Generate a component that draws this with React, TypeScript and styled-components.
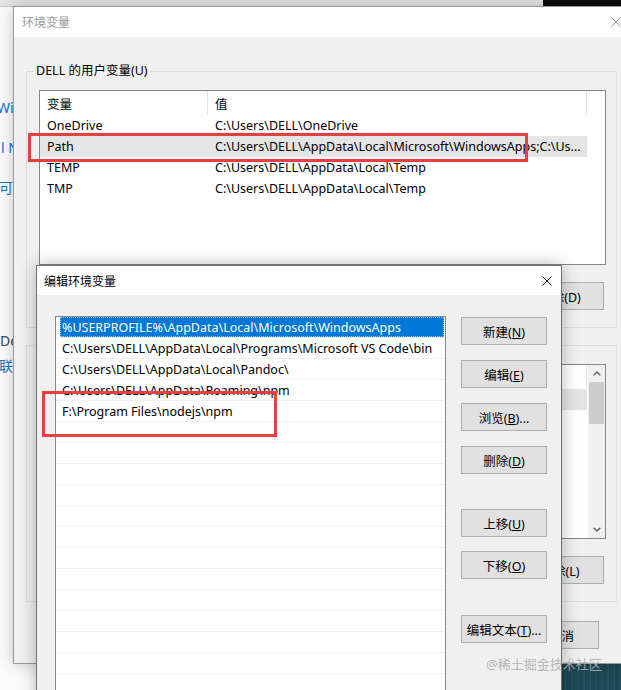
import React from "react";
import styled, { createGlobalStyle } from "styled-components";

const GlobalStyle = createGlobalStyle`
  html, body { margin: 0; padding: 0; }
  body {
    width: 621px;
    height: 690px;
    overflow: hidden;
    background: #ffffff;
    font-family: "Noto Sans", "Noto Sans CJK SC", sans-serif;
    font-size: 12.5px;
    color: #000;
  }
  * { box-sizing: border-box; }
`;

const Desktop = styled.div`
  position: relative;
  width: 621px;
  height: 690px;
  overflow: hidden;
  background: #ffffff;
`;

/* ---------- window behind everything ---------- */
const BackWindow = styled.div`
  position: absolute;
  inset: 0;
  display: flex;
  flex-direction: column;
  background: #fbfbfb;
`;

const TopStrip = styled.div`
  height: 7px;
  flex: none;
  display: flex;
  justify-content: flex-end;
  background: #e4e4e4;
  border-bottom: 1px solid #c8c8c8;
`;

const DarkBlock = styled.div`
  width: 78px;
  background: #0e0e0e;
`;

const Fragment = styled.div<{ $mt: number; $x: number; $link?: boolean }>`
  margin-top: ${(p) => p.$mt}px;
  margin-left: ${(p) => p.$x}px;
  font-size: 14px;
  line-height: 20px;
  white-space: nowrap;
  color: ${(p) => (p.$link ? "#1a6fc6" : "#444")};
`;

const DesktopCorner = styled.div`
  position: absolute;
  left: 562px;
  top: 664px;
  width: 59px;
  height: 26px;
  background: repeating-linear-gradient(90deg, #1d4853 0px, #1d4853 3px, #245663 4px, #1a3f49 6px);
`;

/* ---------- shared window chrome ---------- */
const TitleBar = styled.div<{ $h: number; $pl: number; $pr: number; $active?: boolean }>`
  height: ${(p) => p.$h}px;
  flex: none;
  display: flex;
  align-items: center;
  justify-content: space-between;
  padding: 0 ${(p) => p.$pr}px 0 ${(p) => p.$pl}px;
  background: #ffffff;
  font-size: 12px;
  color: ${(p) => (p.$active ? "#000" : "#999")};
`;

const CloseIcon = ({ color }: { color: string }) => (
  <svg width="10" height="10" viewBox="0 0 10 10">
    <path d="M0.5 0.5 L9.5 9.5 M9.5 0.5 L0.5 9.5" stroke={color} strokeWidth="1" fill="none" />
  </svg>
);

const WinButton = styled.div<{ $w: number; $mt?: number }>`
  width: ${(p) => p.$w}px;
  height: 28px;
  flex: none;
  margin-top: ${(p) => p.$mt ?? 0}px;
  display: flex;
  align-items: center;
  justify-content: center;
  background: #e1e1e1;
  border: 1px solid #adadad;
  font-size: 12.5px;
  color: #000;
  white-space: nowrap;
`;

/* ---------- 环境变量 window ---------- */
const EnvWindow = styled.div`
  position: absolute;
  left: 13px;
  top: 6px;
  width: 617px;
  height: 658px;
  display: flex;
  flex-direction: column;
  background: #f0f0f0;
  border: 1px solid #9a9a9a;
  box-shadow: 0 0 14px rgba(0, 0, 0, 0.22);
`;

const EnvBody = styled.div`
  flex: 1;
  display: flex;
  flex-direction: column;
  padding: 34px 12px 0 12px;
`;

const GroupBox = styled.div<{ $mt?: number }>`
  position: relative;
  height: 257px;
  flex: none;
  margin-top: ${(p) => p.$mt ?? 0}px;
  display: flex;
  flex-direction: column;
  padding: 18px 10px 0 12px;
  border: 1px solid #dcdcdc;
`;

const GroupLabel = styled.div`
  position: absolute;
  left: 7px;
  top: -9px;
  padding: 0 2px;
  line-height: 16px;
  background: #f0f0f0;
  font-size: 12.5px;
`;

const VarList = styled.div`
  height: 175px;
  flex: none;
  display: flex;
  background: #fff;
  border: 1px solid #828790;
  overflow: hidden;
`;

const VarColumn = styled.div`
  flex: 1;
  display: flex;
  flex-direction: column;
  min-width: 0;
`;

const VarGrid = styled.div<{ $selected?: boolean; $header?: boolean }>`
  display: grid;
  grid-template-columns: 168px 379px 1fr;
  height: ${(p) => (p.$header ? 24 : 21)}px;
  flex: none;
`;

const VarCell = styled.div<{ $selected?: boolean; $divider?: boolean }>`
  display: flex;
  align-items: center;
  padding-left: 7px;
  overflow: hidden;
  white-space: nowrap;
  background: ${(p) => (p.$selected ? "#e5e5e5" : "transparent")};
  border-right: ${(p) => (p.$divider ? "1px solid #e5e5e5" : "none")};
`;

const HeadDivider = styled.div`
  border-left: 1px solid #e5e5e5;
`;

const ScrollBar = styled.div`
  width: 17px;
  flex: none;
  display: flex;
  flex-direction: column;
  background: #f0f0f0;
`;

const ScrollArrow = styled.div`
  height: 17px;
  flex: none;
  display: flex;
  align-items: center;
  justify-content: center;
`;

const ScrollTrack = styled.div`
  flex: 1;
  display: flex;
  flex-direction: column;
`;

const ScrollThumb = styled.div`
  height: 42px;
  margin: 0 1px;
  background: #cdcdcd;
`;

const ButtonRow = styled.div<{ $mt: number; $pr: number }>`
  display: flex;
  justify-content: flex-end;
  gap: 9px;
  margin-top: ${(p) => p.$mt}px;
  padding-right: ${(p) => p.$pr}px;
`;

/* ---------- 编辑环境变量 window ---------- */
const EditWindow = styled.div`
  position: absolute;
  left: 36px;
  top: 265px;
  width: 526px;
  height: 440px;
  display: flex;
  flex-direction: column;
  background: #f0f0f0;
  border: 1px solid #707070;
  box-shadow: 0 0 16px rgba(0, 0, 0, 0.28);
`;

const EditBody = styled.div`
  flex: 1;
  display: flex;
  gap: 15px;
  padding: 21px 0 0 18px;
`;

const PathList = styled.div`
  width: 391px;
  height: 420px;
  flex: none;
  display: flex;
  flex-direction: column;
  background: #fff;
  border: 1px solid #828790;
  overflow: hidden;
`;

const PathRow = styled.div`
  height: 21px;
  flex: none;
  display: flex;
  border-bottom: 1px solid #f0f0f0;
`;

const PathText = styled.div<{ $selected?: boolean }>`
  flex: 1;
  margin-left: 4px;
  margin-right: 1px;
  padding-left: 2px;
  display: flex;
  align-items: center;
  white-space: nowrap;
  overflow: hidden;
  background: ${(p) => (p.$selected ? "#0078d7" : "transparent")};
  color: ${(p) => (p.$selected ? "#fff" : "#000")};
  outline: ${(p) => (p.$selected ? "1px dotted #9cc3ea" : "none")};
  outline-offset: -1px;
`;

const ButtonColumn = styled.div`
  display: flex;
  flex-direction: column;
  padding-top: 1px;
`;

/* ---------- overlays ---------- */
const Annotation = styled.div<{ $x: number; $y: number; $w: number; $h: number }>`
  position: absolute;
  left: ${(p) => p.$x}px;
  top: ${(p) => p.$y}px;
  width: ${(p) => p.$w}px;
  height: ${(p) => p.$h}px;
  border: 3px solid #e8403f;
  pointer-events: none;
`;

const Watermark = styled.div`
  position: absolute;
  left: 486px;
  top: 654px;
  font-size: 13px;
  line-height: 20px;
  color: rgba(175, 175, 175, 0.9);
  white-space: nowrap;
`;

/* ---------- data ---------- */
type Var = { name: string; value: string; selected?: boolean };

const userVars: Var[] = [
  { name: "OneDrive", value: "C:\\Users\\DELL\\OneDrive" },
  { name: "Path", value: "C:\\Users\\DELL\\AppData\\Local\\Microsoft\\WindowsApps;C:\\Us...", selected: true },
  { name: "TEMP", value: "C:\\Users\\DELL\\AppData\\Local\\Temp" },
  { name: "TMP", value: "C:\\Users\\DELL\\AppData\\Local\\Temp" },
];

const systemVars: Var[] = [
  { name: "ComSpec", value: "C:\\WINDOWS\\system32\\cmd.exe", selected: true },
  { name: "DriverData", value: "C:\\Windows\\System32\\Drivers\\DriverData" },
  { name: "NUMBER_OF_PROCESSORS", value: "8" },
  { name: "OS", value: "Windows_NT" },
  { name: "PATHEXT", value: ".COM;.EXE;.BAT;.CMD;.VBS" },
  { name: "PROCESSOR_ARCHITECTURE", value: "AMD64" },
  { name: "PROCESSOR_LEVEL", value: "6" },
];

const paths: string[] = [
  "%USERPROFILE%\\AppData\\Local\\Microsoft\\WindowsApps",
  "C:\\Users\\DELL\\AppData\\Local\\Programs\\Microsoft VS Code\\bin",
  "C:\\Users\\DELL\\AppData\\Local\\Pandoc\\",
  "C:\\Users\\DELL\\AppData\\Roaming\\npm",
  "F:\\Program Files\\nodejs\\npm",
  ...Array.from({ length: 15 }, () => ""),
];

const Mn = ({ label, key: _k, u, tail }: { label: string; key?: string; u: string; tail?: string }) => (
  <span>
    {label}(<u>{u}</u>){tail ?? ""}
  </span>
);

const Chevron = ({ up }: { up?: boolean }) => (
  <svg width="8" height="5" viewBox="0 0 8 5">
    <path d={up ? "M0.7 4.3 L4 1 L7.3 4.3" : "M0.7 0.7 L4 4 L7.3 0.7"} stroke="#606060" strokeWidth="1.4" fill="none" />
  </svg>
);

const VariableList = ({ vars, scroll }: { vars: Var[]; scroll?: boolean }) => (
  <VarList>
    <VarColumn>
      <VarGrid $header>
        <VarCell $divider>变量</VarCell>
        <VarCell $divider>值</VarCell>
        <span />
      </VarGrid>
      {vars.map((v) => (
        <VarGrid key={v.name}>
          <VarCell $selected={v.selected}>{v.name}</VarCell>
          <VarCell $selected={v.selected}>{v.value}</VarCell>
          <span />
        </VarGrid>
      ))}
    </VarColumn>
    {scroll && (
      <ScrollBar>
        <ScrollArrow>
          <Chevron up />
        </ScrollArrow>
        <ScrollTrack>
          <ScrollThumb />
        </ScrollTrack>
        <ScrollArrow>
          <Chevron />
        </ScrollArrow>
      </ScrollBar>
    )}
  </VarList>
);

export default function App() {
  return (
    <Desktop>
      <GlobalStyle />
      <BackWindow>
        <TopStrip>
          <DarkBlock />
        </TopStrip>
        <Fragment $mt={91} $x={-3} $link>
          Windows
        </Fragment>
        <Fragment $mt={20} $x={1} $link>
          l Ne
        </Fragment>
        <Fragment $mt={20} $x={-1} $link>
          可选
        </Fragment>
        <Fragment $mt={133} $x={0}>
          Dev
        </Fragment>
        <Fragment $mt={5} $x={-1} $link>
          联系
        </Fragment>
      </BackWindow>
      <DesktopCorner />

      <EnvWindow>
        <TitleBar $h={30} $pl={8} $pr={8}>
          <span>环境变量</span>
          <CloseIcon color="#9a9a9a" />
        </TitleBar>
        <EnvBody>
          <GroupBox>
            <GroupLabel>DELL 的用户变量(U)</GroupLabel>
            <VariableList vars={userVars} />
            <ButtonRow $mt={17} $pr={2}>
              <WinButton $w={88}>
                <Mn label="新建" u="N" tail="..." />
              </WinButton>
              <WinButton $w={88}>
                <Mn label="编辑" u="E" tail="..." />
              </WinButton>
              <WinButton $w={88}>删除(D)</WinButton>
            </ButtonRow>
          </GroupBox>
          <GroupBox $mt={17}>
            <GroupLabel>系统变量(S)</GroupLabel>
            <VariableList vars={systemVars} scroll />
            <ButtonRow $mt={17} $pr={2}>
              <WinButton $w={88}>新建(W)...</WinButton>
              <WinButton $w={88}>编辑(I)...</WinButton>
              <WinButton $w={88}>删除(L)</WinButton>
            </ButtonRow>
          </GroupBox>
          <ButtonRow $mt={19} $pr={18}>
            <WinButton $w={75}>确定</WinButton>
            <WinButton $w={75}>取消</WinButton>
          </ButtonRow>
        </EnvBody>
      </EnvWindow>

      <EditWindow>
        <TitleBar $h={29} $pl={7} $pr={9} $active>
          <span>编辑环境变量</span>
          <CloseIcon color="#111" />
        </TitleBar>
        <EditBody>
          <PathList>
            {paths.map((p, i) => (
              <PathRow key={i}>
                <PathText $selected={i === 0}>{p}</PathText>
              </PathRow>
            ))}
          </PathList>
          <ButtonColumn>
            <WinButton $w={86}>
              <Mn label="新建" u="N" />
            </WinButton>
            <WinButton $w={86} $mt={15}>
              <Mn label="编辑" u="E" />
            </WinButton>
            <WinButton $w={86} $mt={15}>
              <Mn label="浏览" u="B" tail="..." />
            </WinButton>
            <WinButton $w={86} $mt={15}>
              <Mn label="删除" u="D" />
            </WinButton>
            <WinButton $w={86} $mt={35}>
              <Mn label="上移" u="U" />
            </WinButton>
            <WinButton $w={86} $mt={14}>
              <Mn label="下移" u="O" />
            </WinButton>
            <WinButton $w={86} $mt={36}>
              <Mn label="编辑文本" u="T" tail="..." />
            </WinButton>
          </ButtonColumn>
        </EditBody>
      </EditWindow>

      <Annotation $x={28} $y={133} $w={500} $h={29} />
      <Annotation $x={42} $y={391} $w={235} $h={46} />
      <Watermark>@稀土掘金技术社区</Watermark>
    </Desktop>
  );
}
